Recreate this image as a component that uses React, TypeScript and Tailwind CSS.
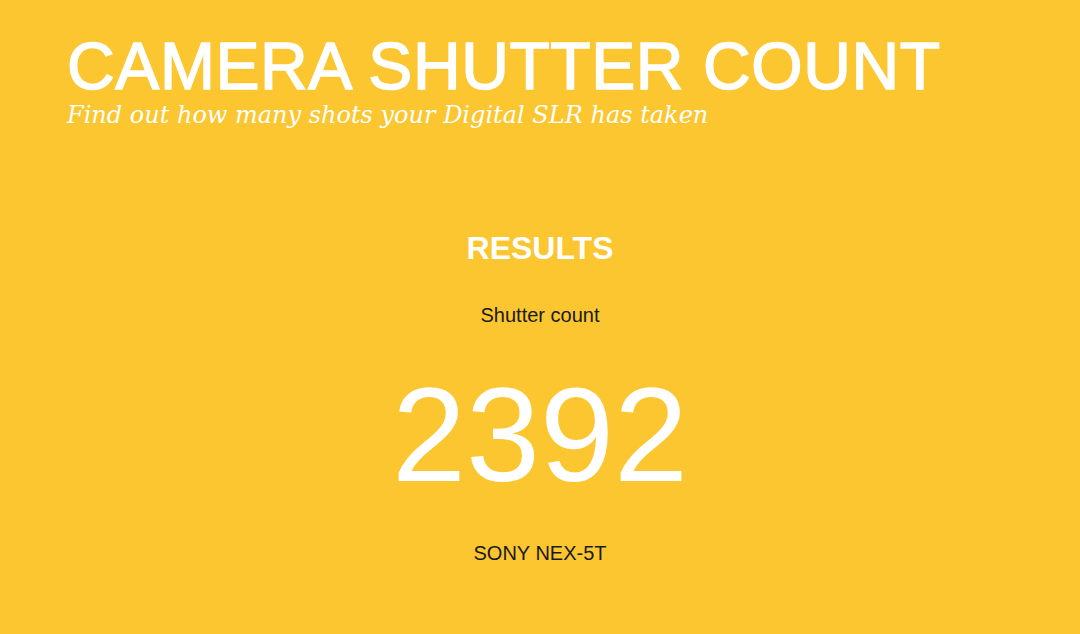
export default function App() {
  return (
    <div className="min-h-[634px] w-full bg-[#fbc62f] font-['Liberation_Sans',Arial,sans-serif]">
      {/* Header */}
      <header className="px-[67px] pt-[33px]">
        <h1 className="text-[66px] leading-none tracking-[0.6px] text-white [-webkit-text-stroke:1.5px_#fff]">
          CAMERA SHUTTER COUNT
        </h1>
        <p className="mt-[4px] font-['DejaVu_Serif',Georgia,serif] text-[24px] italic leading-none text-white">
          Find out how many shots your Digital SLR has taken
        </p>
      </header>

      {/* Results */}
      <main className="mt-[105px] flex flex-col items-center">
        <h2 className="text-[32px] font-bold leading-none text-white">RESULTS</h2>
        <p className="mt-[41px] text-[20px] leading-none text-[#1a1a1a]">Shutter count</p>
        <p className="mt-[44px] text-[133px] leading-none text-white">2392</p>
        <p className="mt-[41px] text-[20px] leading-none text-[#1a1a1a]">SONY NEX-5T</p>
      </main>
    </div>
  );
}
